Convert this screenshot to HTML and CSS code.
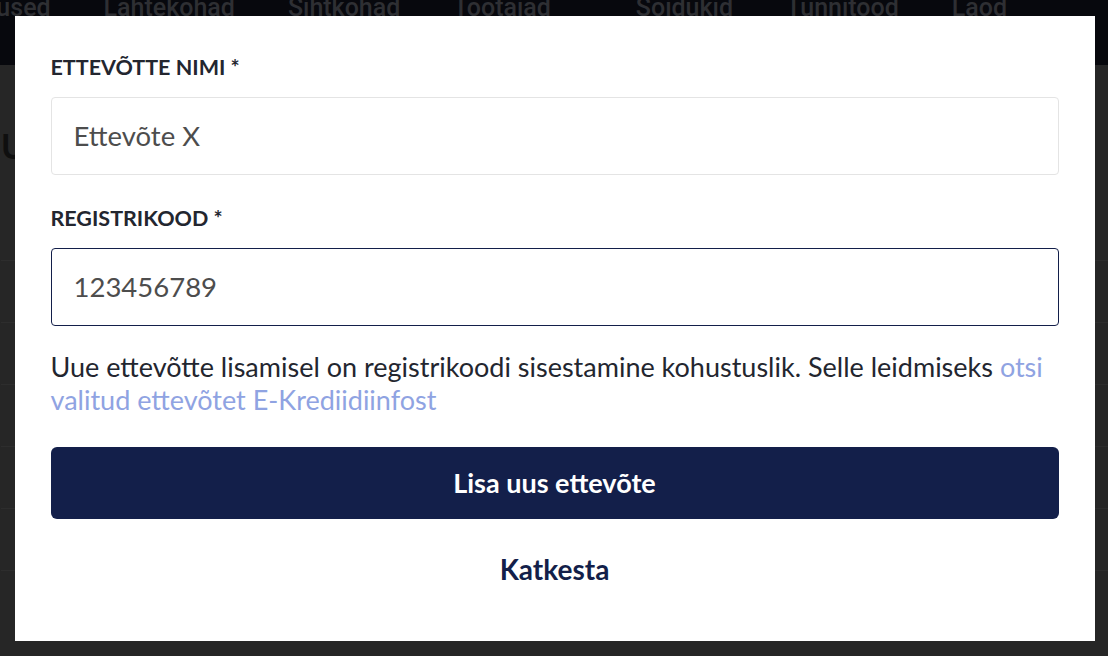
FILE: index.html
```html
<!DOCTYPE html>
<html>
  <head>
    <meta charset="UTF-8" />
    <title>Ettevõtted</title>
    <link rel="stylesheet" href="styles.css">
  </head>
  <body>
    <div class="backdrop">
      <ul class="topnav">
        <li><a href="#">Tellimused</a></li>
        <li><a href="#">Lähtekohad</a></li>
        <li><a href="#">Sihtkohad</a></li>
        <li class="wide"><a href="#">Töötajad</a></li>
        <li><a href="#">Sõidukid</a></li>
        <li><a href="#">Tunnitööd</a></li>
        <li><a href="#">Laod</a></li>
      </ul>
      <div class="content">
        <h1>Uued ettevõtted</h1>
        <div class="rows">
          <div class="row"></div>
          <div class="row"></div>
          <div class="row"></div>
          <div class="row"></div>
          <div class="row"></div>
          <div class="row"></div>
        </div>
      </div>
    </div>

    <div class="overlay">
      <form class="modal">
        <label class="field-label" for="nimi">Ettevõtte nimi *</label>
        <input class="field" type="text" id="nimi" name="nimi" value="Ettevõte X" />

        <label class="field-label" for="kood">Registrikood *</label>
        <input class="field focused" type="text" id="kood" name="kood" value="123456789" />

        <p class="hint">
          Uue ettevõtte lisamisel on registrikoodi sisestamine kohustuslik. Selle leidmiseks
          <a href="#">otsi valitud ettevõtet E-Krediidiinfost</a>
        </p>

        <button type="button" class="btn-primary">Lisa uus ettevõte</button>
        <button type="button" class="btn-link">Katkesta</button>
      </form>
    </div>
  </body>
</html>
```

FILE: styles.css
```css
html,
body {
  margin: 0;
  padding: 0;
  height: 100%;
  overflow: hidden;
}

body {
  background-color: #262626;
  font-family: "Lato", "Liberation Sans", sans-serif;
}

/* page behind the dialog, already dimmed */
.backdrop {
  height: 100%;
}

.topnav {
  list-style-type: none;
  margin: 0 0 0 -72px;
  padding: 0;
  height: 65px;
  display: flex;
  gap: 53px;
  background-color: #07080d;
  overflow: hidden;
}

.topnav li.wide {
  margin-right: 32px;
}

.topnav a {
  display: block;
  margin-top: -7px;
  color: #2e2f33;
  font-family: "Roboto", sans-serif;
  font-weight: 500;
  font-size: 25px;
  text-decoration: none;
}

.content {
  padding: 0 0 0 1px;
}

.content h1 {
  margin: 60px 0 0 0;
  font-size: 34px;
  font-weight: 700;
  color: #0f0f0f;
}

.rows {
  margin-top: 94px;
}

.row {
  height: 61px;
  border-top: 1px solid #2d2d2d;
}

/* dialog */
.overlay {
  position: fixed;
  top: 0;
  left: 0;
  right: 0;
  bottom: 0;
  display: flex;
  align-items: center;
  justify-content: center;
}

.modal {
  width: 1080px;
  box-sizing: border-box;
  margin-left: 1px;
  padding: 39px 36px 42px 36px;
  background-color: white;
  display: flex;
  flex-direction: column;
}

.field-label {
  display: block;
  font-size: 21.5px;
  font-weight: 700;
  line-height: 25px;
  text-transform: uppercase;
  color: #23262f;
  margin-bottom: 17px;
}

.field {
  display: block;
  box-sizing: border-box;
  width: 100%;
  height: 78px;
  padding: 0 22px;
  border: 1px solid #e4e4e4;
  border-radius: 4px;
  font-family: "Lato", sans-serif;
  font-size: 27.5px;
  color: #4d4d4d;
  background: white;
  outline: none;
  margin-bottom: 31px;
}

.field.focused {
  border-color: #131f4a;
  margin-bottom: 24px;
}

.hint {
  margin: 0 0 31px 0;
  font-size: 27px;
  line-height: 33px;
  color: #23262f;
}

.hint a {
  color: #8fa3e2;
  text-decoration: none;
}

.btn-primary {
  height: 72px;
  border: none;
  border-radius: 6px;
  background-color: #131f4a;
  color: white;
  font-family: "Lato", sans-serif;
  font-weight: 700;
  font-size: 27px;
  cursor: pointer;
}

.btn-link {
  margin-top: 20px;
  height: 60px;
  border: none;
  background: none;
  color: #131f4a;
  font-family: "Lato", sans-serif;
  font-weight: 700;
  font-size: 28px;
  cursor: pointer;
}
```
